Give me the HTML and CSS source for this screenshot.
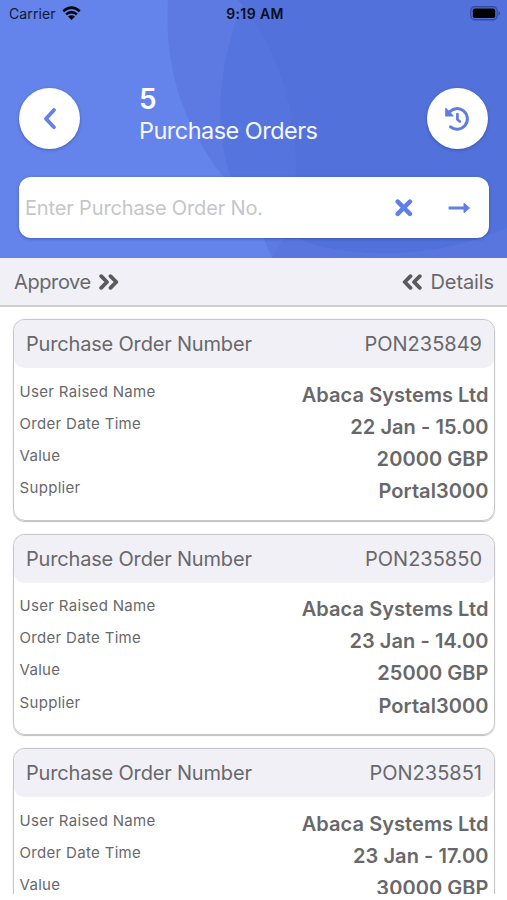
FILE: index.html
```
<!DOCTYPE html>
<html lang="en">
<head>
<meta charset="utf-8">
<title>Purchase Orders</title>
<link rel="stylesheet" href="styles.css">
</head>
<body>
<main class="phone">
  <header class="hero">
    <svg class="backdrop" viewBox="0 0 507 258" aria-hidden="true">
      <path fill="#5c7ae2" d="M168 0C164 64 181 122 222 175C245 202 261 230 272 258H507V0Z"/>
      <path fill="#5674dd" d="M244 0C217 66 214 124 230 175C244 212 282 237 318 246C382 260 448 254 507 228V0Z"/>
      <path fill="#5271da" d="M238 0C290 60 307 153 289 225L283 232L318 246C382 260 448 254 507 228V0Z"/>
      <path fill="#5876de" d="M285 236L272 258H507V228C448 254 382 260 318 246Z"/>
    </svg>
    <div class="status">
      <div class="carrier"><span>Carrier</span>
        <svg width="19" height="15" viewBox="0 0 19 15" fill="none" stroke="#050609" stroke-width="2.5"><path d="M1.2 5.2Q9.5-2 17.8 5.2M4.1 8.4Q9.5 3.8 14.9 8.4"/><path fill="#050609" stroke="none" d="M6 10.6Q9.5 7.8 13 10.6L9.5 14Z"/></svg>
      </div>
      <span class="clock">9:19 AM</span>
      <svg class="battery" width="31" height="15" viewBox="0 0 31 15"><rect x=".8" y=".8" width="26.4" height="13" rx="4" fill="none" stroke="#344c9f" stroke-width="1.4"/><rect x="2.8" y="2.6" width="22.4" height="9.4" rx="1.8" fill="#000"/><path d="M28.6 5v5q3-2.500 0-5" fill="#344c9f"/></svg>
    </div>
    <div class="titlebar">
      <button class="round" aria-label="Back"><svg width="61" height="61" viewBox="0 0 61 61" fill="none" stroke="#6282e8" stroke-width="3.8" stroke-linecap="round" stroke-linejoin="round"><path d="M35 22L27 30.800L35 39.200"/></svg></button>
      <h1 class="title"><strong>5</strong><span>Purchase Orders</span></h1>
      <button class="round" aria-label="History"><svg width="61" height="61" viewBox="0 0 61 61" fill="none" stroke="#607ce0" stroke-width="3" stroke-linecap="round" stroke-linejoin="round"><path d="M22 24.500A10.300 10.300 0 1 1 23.500 38.800"/><path stroke-width="2.700" d="M30.400 26v5.500l2.500 2"/><path fill="#607ce0" stroke-width="1.200" d="M18.800 20.500v7.400h7.200Z"/></svg></button>
    </div>
    <div class="search">
      <span class="placeholder">Enter Purchase Order No.</span>
      <svg width="18" height="18" viewBox="0 0 18 18" fill="none" stroke="#607fe8" stroke-width="4.500" stroke-linecap="round"><path d="M2.700 2.700L14.900 14.900M14.900 2.700L2.700 14.900"/></svg>
      <svg class="arrow" width="23" height="14" viewBox="0 0 23 14" fill="#607fe8"><rect x=".5" y="5.400" width="16.500" height="3.200" rx="1"/><path stroke="#607fe8" stroke-linejoin="round" d="M16 2.200L21.500 7L16 11.800Z"/></svg>
    </div>
  </header>
  <nav class="hints">
    <div><span class="approve">Approve</span><svg width="20" height="18" viewBox="0 0 20 18" fill="none" stroke="#5a5a5d" stroke-width="3.800" stroke-linecap="round" stroke-linejoin="round"><path d="M2.200 3.200L8 9L2.200 14.800M11.500 3.200L17.300 9L11.500 14.800"/></svg></div>
    <div><svg width="20" height="18" viewBox="0 0 20 18" fill="none" stroke="#5a5a5d" stroke-width="3.800" stroke-linecap="round" stroke-linejoin="round"><path d="M8.500 3.200L2.700 9L8.500 14.800M17.800 3.200L12 9L17.800 14.800"/></svg><span class="details">Details</span></div>
  </nav>
  <section class="orders">
    <article class="card">
      <h2><span>Purchase Order Number</span><span class="num">PON235849</span></h2>
      <dl><dt>User Raised Name</dt><dd>Abaca Systems Ltd</dd><dt>Order Date Time</dt><dd>22 Jan - 15.00</dd><dt>Value</dt><dd>20000 GBP</dd><dt>Supplier</dt><dd>Portal3000</dd></dl>
    </article>
    <article class="card">
      <h2><span>Purchase Order Number</span><span class="num">PON235850</span></h2>
      <dl><dt>User Raised Name</dt><dd>Abaca Systems Ltd</dd><dt>Order Date Time</dt><dd>23 Jan - 14.00</dd><dt>Value</dt><dd>25000 GBP</dd><dt>Supplier</dt><dd>Portal3000</dd></dl>
    </article>
    <article class="card">
      <h2><span>Purchase Order Number</span><span class="num">PON235851</span></h2>
      <dl><dt>User Raised Name</dt><dd>Abaca Systems Ltd</dd><dt>Order Date Time</dt><dd>23 Jan - 17.00</dd><dt>Value</dt><dd>30000 GBP</dd></dl>
    </article>
  </section>
</main>
</body>
</html>
```
FILE: styles.css
```
* { box-sizing: border-box; }
body { margin: 0; background: #fff; font-family: Inter, "Liberation Sans", sans-serif; color: #68686b; }
.phone { width: 507px; height: 900px; overflow: hidden; }
svg { display: block; flex: none; }
.hero { position: relative; height: 258px; background: #6483eb; }
.backdrop { position: absolute; inset: 0; width: 507px; height: 258px; }
.status, .titlebar, .search { position: relative; }
.status { display: grid; grid-template-columns: 1fr auto 1fr; align-items: center; height: 27px; padding: 0 6px 0 9px; color: #101a35; }
.carrier { display: flex; align-items: center; gap: 6px; font-size: 14px; letter-spacing: .1px; }
.clock { font-size: 14px; font-weight: 600; letter-spacing: .4px; color: #090e1c; }
.battery { justify-self: end; }
.titlebar { display: flex; height: 150px; padding: 61px 19px 0; }
.round { width: 61px; height: 61px; padding: 0; border: 0; border-radius: 50%; background: #fff; box-shadow: 0 1px 3px #263d8785; }
.title { flex: 1; margin: -5px 0 0 59px; color: #fff; font-weight: 400; line-height: 32px; }
.title strong, .title span { display: block; }
.title strong { font-size: 28px; font-weight: 600; }
.title span { font-size: 23.500px; letter-spacing: -.53px; color: #f5f7ff; }
.search { display: flex; align-items: center; height: 61px; margin: 0 18.500px 0 19px; padding: 0 18px 0 6px; border-radius: 12px; background: #fff; box-shadow: 0 1px 3px #263d8785; }
.placeholder { flex: 1; font-size: 20px; letter-spacing: -.15px; color: #c5c6ca; }
.arrow { margin-left: 35px; }
.hints { display: flex; justify-content: space-between; height: 49px; padding: 0 13px 0 14px; background: #f1f0f6; border-bottom: 2px solid #cfcfd1; font-size: 20px; }
.hints div { display: flex; align-items: center; gap: 8px; }
.approve { letter-spacing: -.4px; }
.details { letter-spacing: -.1px; }
.orders { height: 587px; padding: 12px 12px 0 13px; overflow: hidden; }
.card { height: 201.500px; margin-bottom: 13px; border: 1px solid #c6c6c9; border-radius: 12px; box-shadow: 0 .5px 1px #00000040; overflow: hidden; }
.card h2 { display: flex; align-items: center; justify-content: space-between; height: 48px; margin: 0; padding: 0 12px; border-radius: 10px; background: #f1f0f6; font-size: 20px; font-weight: 400; letter-spacing: -.18px; }
.num { letter-spacing: 0; }
.card dl { display: grid; grid-template-columns: 1fr auto; grid-auto-rows: 32.200px; margin: 7.500px 5.500px 0; align-items: start; }
.card dt { font-size: 15px; letter-spacing: .32px; line-height: 32px; }
.card dd { margin: 0; font-size: 20px; font-weight: 600; letter-spacing: .06px; line-height: 38px; text-align: right; }
```
